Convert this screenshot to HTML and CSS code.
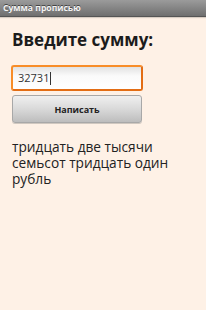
FILE: index.html
```html
<html>
  <head>
    <link rel="stylesheet" href="styles.css">
  </head>
  <body>
    <header class="title-bar">Сумма прописью</header>
    <main class="content">
      <h1 class="prompt">Введите сумму:</h1>
      <div class="amount-input">32731<span class="caret"></span></div>
      <button class="write-button">Написать</button>
      <p class="result">тридцать две тысячи семьсот тридцать один рубль</p>
    </main>
  </body>
</html>
```
FILE: styles.css
```css
body {
  margin: 0;
  width: 206px;
  height: 310px;
  background: #fef1e6;
  font-family: "Open Sans", "DejaVu Sans", sans-serif;
  color: #1b1b1b;
  overflow: hidden;
}
.title-bar {
  height: 16px;
  line-height: 16px;
  padding-left: 3px;
  font-size: 8.6px;
  font-weight: bold;
  color: #f4f4f4;
  text-shadow: 0 -1px 0 #444;
  background: linear-gradient(#9b9b9b, #6f6f6f);
  border-bottom: 1px solid #555;
  box-shadow: 0 1px 1px rgba(0,0,0,0.15);
}
.content {
  padding: 0 11px;
}
.prompt {
  margin: 12px 0 0 1px;
  font-size: 17px;
  line-height: 22px;
  font-weight: bold;
  color: #1c1c1c;
}
.amount-input {
  box-sizing: border-box;
  width: 132px;
  height: 26px;
  margin-top: 14px;
  padding-left: 5px;
  border: 2px solid #f88d28;
  border-right-color: #e36d14;
  border-bottom-color: #e36d14;
  border-radius: 3px;
  background: linear-gradient(#e2e2e2, #fafafa 40%, #ffffff);
  font-size: 11px;
  line-height: 22px;
  color: #333;
}
.caret {
  display: inline-block;
  width: 1px;
  height: 13px;
  margin-left: 1px;
  vertical-align: -3px;
  background: #333;
}
.write-button {
  display: block;
  box-sizing: border-box;
  width: 130px;
  height: 28px;
  margin: 4px 0 0 1px;
  border: 1px solid #a8a8a8;
  border-radius: 3px;
  background: linear-gradient(#f0f0f0, #d9d9d9 50%, #bdbdbd);
  box-shadow: 0 1px 0 #d0c8c0;
  font-family: "Open Sans", "DejaVu Sans", sans-serif;
  font-size: 9px;
  font-weight: bold;
  color: #222;
}
.result {
  margin: 16px 0 0 1px;
  font-size: 13.7px;
  line-height: 16px;
  color: #222;
}
```
